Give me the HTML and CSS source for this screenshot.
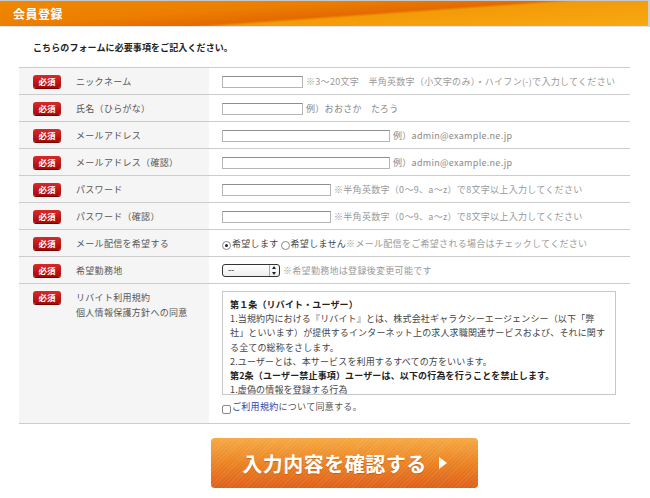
FILE: index.html
```html
<!DOCTYPE html>
<html lang="ja">
<head>
  <meta charset="UTF-8" />
  <title>会員登録</title>
  <link rel="stylesheet" href="styles.css">
</head>
<body>

  <header class="page-head">
    <h1>会員登録</h1>
  </header>

  <p class="lead">こちらのフォームに必要事項をご記入ください。</p>

  <table class="entry">
    <tr>
      <th><span class="req">必須</span><span class="label">ニックネーム</span></th>
      <td><input type="text" class="txt w-s"><span class="note">※3〜20文字　半角英数字（小文字のみ）・ハイフン(-)で入力してください</span></td>
    </tr>
    <tr>
      <th><span class="req">必須</span><span class="label">氏名（ひらがな）</span></th>
      <td><input type="text" class="txt w-s"><span class="note dark">例）おおさか　たろう</span></td>
    </tr>
    <tr>
      <th><span class="req">必須</span><span class="label">メールアドレス</span></th>
      <td><input type="text" class="txt w-l"><span class="note dark">例）admin@example.ne.jp</span></td>
    </tr>
    <tr>
      <th><span class="req">必須</span><span class="label">メールアドレス（確認）</span></th>
      <td><input type="text" class="txt w-l"><span class="note dark">例）admin@example.ne.jp</span></td>
    </tr>
    <tr>
      <th><span class="req">必須</span><span class="label">パスワード</span></th>
      <td><input type="password" class="txt w-m"><span class="note">※半角英数字（0〜9、a〜z）で8文字以上入力してください</span></td>
    </tr>
    <tr>
      <th><span class="req">必須</span><span class="label">パスワード（確認）</span></th>
      <td><input type="password" class="txt w-m"><span class="note">※半角英数字（0〜9、a〜z）で8文字以上入力してください</span></td>
    </tr>
    <tr>
      <th><span class="req">必須</span><span class="label">メール配信を希望する</span></th>
      <td class="radios">
        <label><span class="radio on"></span>希望します</label>
        <label><span class="radio"></span>希望しません</label><span class="note tight">※メール配信をご希望される場合はチェックしてください</span>
      </td>
    </tr>
    <tr>
      <th><span class="req">必須</span><span class="label">希望勤務地</span></th>
      <td><span class="select"><span class="select-val">--</span><span class="select-arrow"></span></span><span class="note">※希望勤務地は登録後変更可能です</span></td>
    </tr>
    <tr class="tall">
      <th><span class="req">必須</span><span class="label">リバイト利用規約<br>個人情報保護方針への同意</span></th>
      <td>
        <div class="terms">
          <b>第１条（リバイト・ユーザー）</b><br>
          1.当規約内における『リバイト』とは、株式会社ギャラクシーエージェンシー（以下「弊社」といいます）が提供するインターネット上の求人求職関連サービスおよび、それに関する全ての総称をさします。<br>
          2.ユーザーとは、本サービスを利用するすべての方をいいます。<br>
          <b>第2条（ユーザー禁止事項）ユーザーは、以下の行為を行うことを禁止します。</b><br>
          1.虚偽の情報を登録する行為
        </div>
        <label class="agree"><span class="check"></span><a>ご利用規約</a>について同意する。</label>
      </td>
    </tr>
  </table>

  <div class="actions">
    <button class="submit">入力内容を確認する<span class="tri"></span></button>
  </div>

</body>
</html>
```

FILE: styles.css
```css
body {
  margin: 0;
  font-family: "Noto Sans CJK JP", "Noto Sans", sans-serif;
  font-size: 9px;
  color: #333;
  background: #fff;
}

.page-head {
  height: 25px;
  border-top: 1px solid #c8c8c8;
  border-right: 2px solid #d0d0d0;
  border-bottom: 1px solid #e4e4e4;
  background: linear-gradient(176deg, #f08800 0%, #ec7e00 35%, #e46a00 54%, #f39a08 58%, #f7aa12 100%);
  display: flex;
  align-items: center;
  padding-left: 13px;
}

.page-head h1 {
  margin: 0;
  font-size: 12px;
  font-weight: bold;
  color: #fff;
  letter-spacing: 0.5px;
}

.lead {
  margin: 14px 0 0 33px;
  height: 26px;
  font-weight: bold;
  font-size: 9px;
  color: #222;
  letter-spacing: 0.1px;
}

.entry {
  margin-left: 19px;
  width: 611px;
  border-collapse: collapse;
  border-top: 1px solid #ccc;
}

.entry tr {
  border-bottom: 1px solid #ccc;
}

.entry th {
  width: 190px;
  height: 26px;
  padding: 0 0 0 14px;
  box-sizing: border-box;
  background: #f5f5f5;
  text-align: left;
  font-weight: normal;
  vertical-align: middle;
  white-space: nowrap;
}

.entry td {
  padding: 0 0 0 13px;
  height: 26px;
  vertical-align: middle;
  white-space: nowrap;
}

.req {
  display: inline-block;
  width: 28px;
  height: 13px;
  line-height: 13px;
  border-radius: 3px;
  background: linear-gradient(#d82a2a, #a80808);
  color: #fff;
  font-size: 8.5px;
  font-weight: bold;
  text-align: center;
  vertical-align: middle;
  box-shadow: 0 1px 0 #700;
}

.label {
  display: inline-block;
  margin-left: 15px;
  vertical-align: middle;
  color: #555;
  letter-spacing: 0.3px;
  line-height: 15px;
}

.txt {
  height: 12px;
  box-sizing: border-box;
  border: 1px solid #b5b5b5;
  border-top-color: #8e8e8e;
  padding: 0;
  margin: 0;
  vertical-align: middle;
  background: #fff;
}

.w-s { width: 81px; }
.w-m { width: 109px; }
.w-l { width: 168px; }

.note {
  margin-left: 3px;
  color: #999;
  vertical-align: middle;
  letter-spacing: 0.3px;
}

.note.dark {
  color: #888;
}

.note.tight {
  margin-left: 0;
}

.radios label {
  vertical-align: middle;
  color: #444;
  letter-spacing: 0.3px;
}

.radio {
  display: inline-block;
  width: 7px;
  height: 7px;
  border: 1px solid #888;
  border-radius: 50%;
  margin-right: 1px;
  vertical-align: -3px;
  position: relative;
  background: #fff;
}

.radio.on::after {
  content: '';
  position: absolute;
  left: 2px;
  top: 2px;
  width: 3px;
  height: 3px;
  border-radius: 50%;
  background: #222;
}

.select {
  display: inline-flex;
  width: 58px;
  height: 13px;
  box-sizing: border-box;
  border: 1.5px solid #333;
  border-radius: 3px;
  vertical-align: middle;
  background: linear-gradient(#fff, #eee);
}

.select-val {
  flex: 1;
  padding-left: 5px;
  line-height: 10px;
  font-size: 9px;
  color: #222;
}

.select-arrow {
  width: 9px;
  border-left: 1px solid #aaa;
  position: relative;
}

.select-arrow::before,
.select-arrow::after {
  content: '';
  position: absolute;
  left: 2px;
  border-left: 2px solid transparent;
  border-right: 2px solid transparent;
}

.select-arrow::before {
  top: 1px;
  border-bottom: 3px solid #222;
}

.select-arrow::after {
  bottom: 1px;
  border-top: 3px solid #222;
}

.entry tr.tall th,
.entry tr.tall td {
  height: 132px;
  vertical-align: top;
}

.entry tr.tall th {
  padding-top: 7px;
}

.entry tr.tall .label {
  vertical-align: top;
  margin-top: -1px;
}

.entry tr.tall .req {
  vertical-align: top;
}

.entry tr.tall td {
  padding-top: 7px;
}

.terms {
  width: 394px;
  height: 104px;
  box-sizing: border-box;
  border: 1px solid #c8c8c8;
  padding: 6px 7px 4px;
  white-space: normal;
  line-height: 14.2px;
  font-size: 9px;
  color: #444;
  letter-spacing: 0.15px;
  overflow: hidden;
}

.terms b {
  color: #222;
}

.agree {
  display: block;
  margin-top: 5px;
  color: #555;
  letter-spacing: 0.3px;
}

.agree a {
  color: #2a3fa8;
}

.check {
  display: inline-block;
  width: 7px;
  height: 7px;
  border: 1px solid #888;
  border-radius: 2px;
  margin-right: 1px;
  vertical-align: -4px;
  background: #fff;
}

.actions {
  padding: 14px 0 0 211px;
}

.submit {
  width: 267px;
  height: 50px;
  border: none;
  border-radius: 4px;
  background:
    repeating-linear-gradient(135deg, rgba(255,255,255,0.08) 0 1px, transparent 1px 3px),
    linear-gradient(#f6a944, #ea8424 50%, #df5f1a);
  color: #fff;
  font-family: "Noto Sans CJK JP", sans-serif;
  font-size: 20px;
  font-weight: bold;
  letter-spacing: 0.5px;
  text-shadow: 0 1px 1px rgba(150,60,0,0.4);
  display: flex;
  align-items: center;
  justify-content: center;
  box-shadow: 0 1px 1px rgba(0,0,0,0.15);
}

.tri {
  display: inline-block;
  margin-left: 12px;
  border-top: 6px solid transparent;
  border-bottom: 6px solid transparent;
  border-left: 8px solid #fff;
}
```
